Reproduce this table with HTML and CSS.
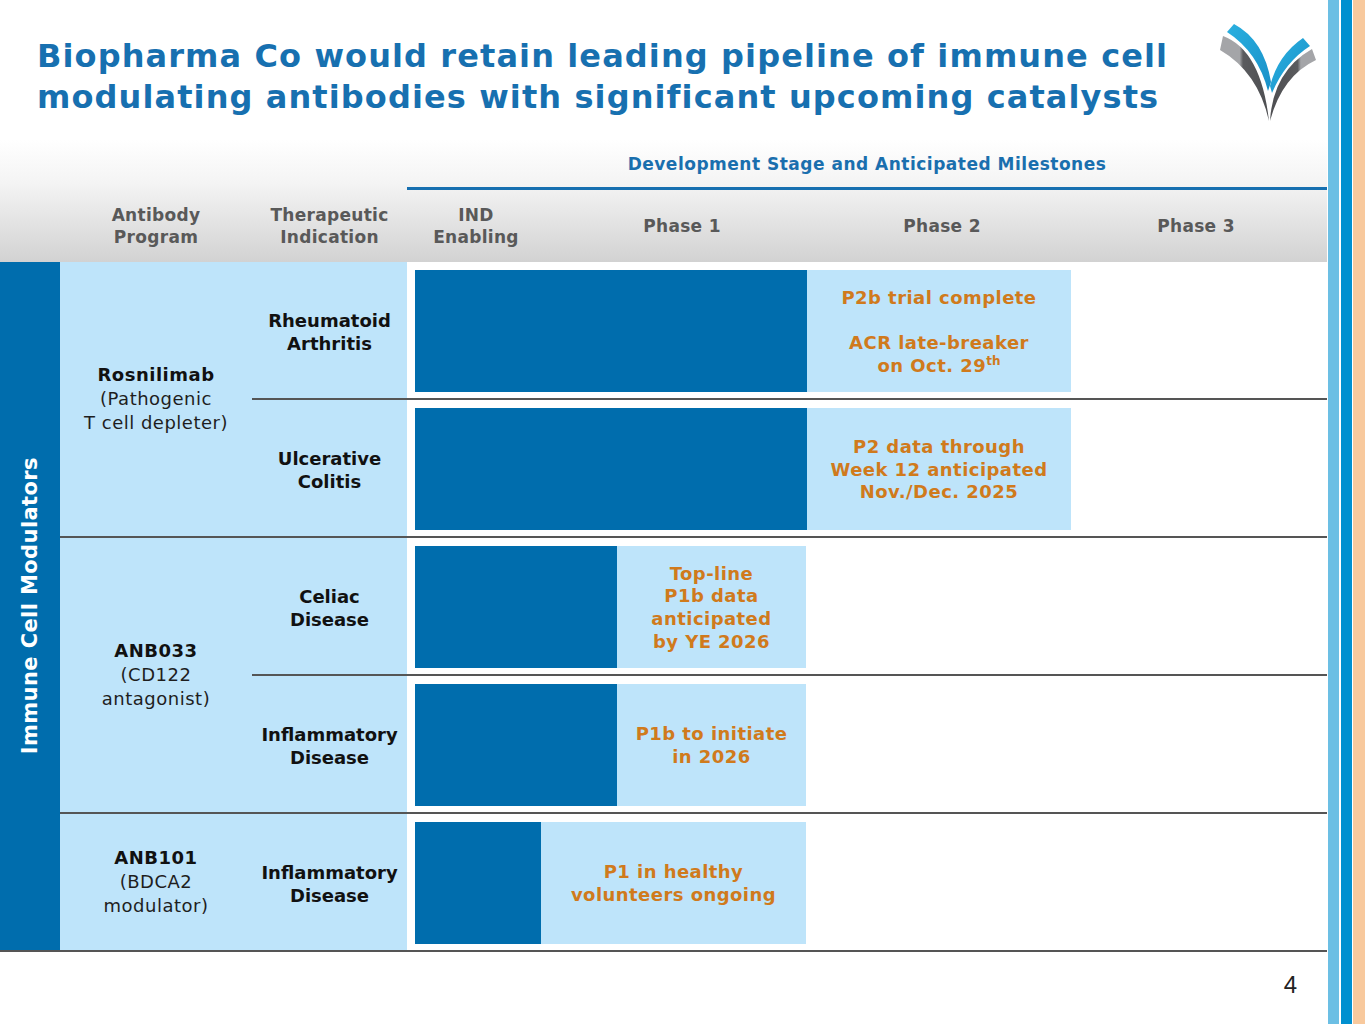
FILE: index.html
```html
<!DOCTYPE html>
<html lang="en">
<head>
<meta charset="utf-8">
<title>Pipeline</title>
<link rel="stylesheet" href="styles.css">
</head>
<body>
<div class="page">
  <div class="main">
    <header class="top">
      <h1 class="title">Biopharma Co would retain leading pipeline of immune cell<br>modulating antibodies with significant upcoming catalysts</h1>
      <svg class="logo" viewBox="0 0 100 105" width="100" height="105" aria-hidden="true">
        <defs>
          <linearGradient id="gl" x1="0" y1="0" x2="1" y2="0">
            <stop offset="0" stop-color="#a4a5a8"/>
            <stop offset="0.4" stop-color="#a4a5a8"/>
            <stop offset="0.47" stop-color="#5a5b5e"/>
            <stop offset="1" stop-color="#4d4e51"/>
          </linearGradient>
          <linearGradient id="gr" x1="1" y1="0" x2="0" y2="0">
            <stop offset="0" stop-color="#a4a5a8"/>
            <stop offset="0.33" stop-color="#a4a5a8"/>
            <stop offset="0.4" stop-color="#5a5b5e"/>
            <stop offset="1" stop-color="#4d4e51"/>
          </linearGradient>
          <linearGradient id="bl" x1="0" y1="0" x2="1" y2="1">
            <stop offset="0" stop-color="#2bb0e0"/>
            <stop offset="1" stop-color="#1790c8"/>
          </linearGradient>
        </defs>
        <path d="M9 12 L16 4 Q46 20 53 62 L50 71 Q40 32 9 12 Z" fill="url(#bl)"/>
        <path d="M5 16 Q43 30 51 101 Q40 52 2 30 Z" fill="url(#gl)"/>
        <path d="M85 18 L92 26 Q67 42 54 73 L52 66 Q60 35 85 18 Z" fill="url(#bl)"/>
        <path d="M94 29 L98 40 Q64 56 52 101 Q55 51 94 29 Z" fill="url(#gr)"/>
      </svg>
    </header>

    <div class="thead">
      <div class="stage-title">Development Stage and Anticipated Milestones</div>
      <div class="stage-line"></div>
      <div class="th th-program">Antibody<br>Program</div>
      <div class="th th-ind">Therapeutic<br>Indication</div>
      <div class="th th-p0">IND<br>Enabling</div>
      <div class="th th-p1">Phase 1</div>
      <div class="th th-p2">Phase 2</div>
      <div class="th th-p3">Phase 3</div>
    </div>

    <div class="tbody">
      <div class="band"><span>Immune Cell Modulators</span></div>

      <div class="prog prog-2"><b>Rosnilimab</b><span>(Pathogenic<br>T cell depleter)</span></div>
      <div class="ind">Rheumatoid<br>Arthritis</div>
      <div class="bars">
        <div class="bar dark" style="width:392px"></div>
        <div class="bar light" style="width:264px"><p class="note">P2b trial complete<br><br>ACR late-breaker<br>on Oct. 29<sup>th</sup></p></div>
      </div>

      <div class="ind">Ulcerative<br>Colitis</div>
      <div class="bars">
        <div class="bar dark" style="width:392px"></div>
        <div class="bar light" style="width:264px"><p class="note">P2 data through<br>Week 12 anticipated<br>Nov./Dec. 2025</p></div>
      </div>

      <div class="prog prog-2"><b>ANB033</b><span>(CD122<br>antagonist)</span></div>
      <div class="ind">Celiac<br>Disease</div>
      <div class="bars">
        <div class="bar dark" style="width:202px"></div>
        <div class="bar light" style="width:189px"><p class="note">Top-line<br>P1b data<br>anticipated<br>by YE 2026</p></div>
      </div>

      <div class="ind">Inflammatory<br>Disease</div>
      <div class="bars">
        <div class="bar dark" style="width:202px"></div>
        <div class="bar light" style="width:189px"><p class="note">P1b to initiate<br>in 2026</p></div>
      </div>

      <div class="prog"><b>ANB101</b><span>(BDCA2<br>modulator)</span></div>
      <div class="ind">Inflammatory<br>Disease</div>
      <div class="bars">
        <div class="bar dark" style="width:126px"></div>
        <div class="bar light" style="width:265px"><p class="note">P1 in healthy<br>volunteers ongoing</p></div>
      </div>
    </div>

    <footer class="foot">4</footer>
  </div>
  <div class="stripes">
    <div class="stripe stripe-light"></div>
    <div class="stripe stripe-dark"></div>
    <div class="stripe stripe-peach"></div>
  </div>
</div>
</body>
</html>
```

FILE: styles.css
```css
* { box-sizing: border-box; }

body {
  margin: 0;
  background: #ffffff;
  font-family: "DejaVu Sans", Verdana, sans-serif;
}

.page {
  display: flex;
  width: 1365px;
  height: 1024px;
  overflow: hidden;
}

.main {
  width: 1327px;
  display: flex;
  flex-direction: column;
}

/* ---------- title ---------- */
.top {
  height: 140px;
  display: flex;
  justify-content: space-between;
  align-items: flex-start;
}

.title {
  margin: 36px 0 0 37px;
  font-size: 32px;
  line-height: 41px;
  letter-spacing: 1.1px;
  font-weight: bold;
  color: #1770b0;
  white-space: nowrap;
}

.logo {
  margin: 20px 9px 0 0;
  width: 100px;
  height: 105px;
  flex: none;
}

/* ---------- header band ---------- */
.thead {
  height: 122px;
  background: linear-gradient(#ffffff 0%, #f4f4f4 35%, #d2d2d2 100%);
  display: grid;
  grid-template-columns: 60px 192px 155px 138px 274px 246px 262px;
  grid-template-rows: 47px 3px 72px;
}

.stage-title {
  grid-column: 4 / 8;
  grid-row: 1;
  display: flex;
  align-items: center;
  justify-content: center;
  color: #1a6fae;
  font-weight: bold;
  font-size: 17px;
  letter-spacing: 0.5px;
}

.stage-line {
  grid-column: 4 / 8;
  grid-row: 2;
  background: #166fb0;
}

.th {
  grid-row: 3;
  display: flex;
  align-items: center;
  justify-content: center;
  text-align: center;
  color: #595959;
  font-weight: bold;
  font-size: 17px;
  line-height: 22px;
  letter-spacing: 0.3px;
}

.th-program { grid-column: 2; }
.th-ind { grid-column: 3; }
.th-p0 { grid-column: 4; }
.th-p1 { grid-column: 5; }
.th-p2 { grid-column: 6; }
.th-p3 { grid-column: 7; }

/* ---------- body ---------- */
.tbody {
  display: grid;
  grid-template-columns: 60px 192px 155px 920px;
  grid-template-rows: repeat(5, 138px);
}

.band {
  grid-column: 1;
  grid-row: 1 / 6;
  background: #006dad;
  border-bottom: 2px solid #555;
  display: flex;
  align-items: center;
  justify-content: center;
}

.band span {
  writing-mode: vertical-rl;
  transform: rotate(180deg);
  color: #ffffff;
  font-weight: bold;
  font-size: 21px;
  letter-spacing: 0.4px;
  white-space: nowrap;
}

.prog,
.ind {
  background: #bee4fa;
  border-bottom: 2px solid #555;
  display: flex;
  flex-direction: column;
  align-items: center;
  justify-content: center;
  text-align: center;
  color: #111;
  font-size: 18px;
}

.prog {
  grid-column: 2;
  line-height: 24px;
  letter-spacing: 0.5px;
}

.prog span { color: #1e1e1e; }

.prog-2 { grid-row: span 2; }

.ind {
  grid-column: 3;
  font-weight: bold;
  line-height: 23px;
  padding-top: 4px;
}

.bars {
  grid-column: 4;
  display: flex;
  align-items: flex-start;
  padding: 8px 0 0 8px;
  border-bottom: 2px solid #555;
}

.bar {
  height: 122px;
  flex: none;
}

.bar.dark { background: #006dad; }

.bar.light {
  background: #bee4fa;
  display: flex;
  align-items: center;
  justify-content: center;
}

.note {
  margin: 0;
  padding-top: 2px;
  text-align: center;
  color: #d07a1c;
  font-weight: bold;
  font-size: 18px;
  line-height: 22.7px;
  letter-spacing: 0.45px;
}

.note sup {
  font-size: 12px;
  line-height: 0;
  vertical-align: 7px;
  letter-spacing: 0;
}

/* ---------- footer ---------- */
.foot {
  flex: 1;
  text-align: right;
  padding: 19px 30px 0 0;
  font-family: "Liberation Sans", Arial, sans-serif;
  font-size: 24px;
  line-height: 28px;
  color: #222;
}

/* ---------- right stripes ---------- */
.stripes {
  width: 38px;
  display: flex;
  flex: none;
}

.stripe { height: 100%; }
.stripe-light { width: 11px; margin-left: 1px; background: #6cbfe4; }
.stripe-dark { width: 11px; margin-left: 2px; background: #0090d0; }
.stripe-peach { width: 12px; margin-left: 1px; background: #f8c99d; }
```
